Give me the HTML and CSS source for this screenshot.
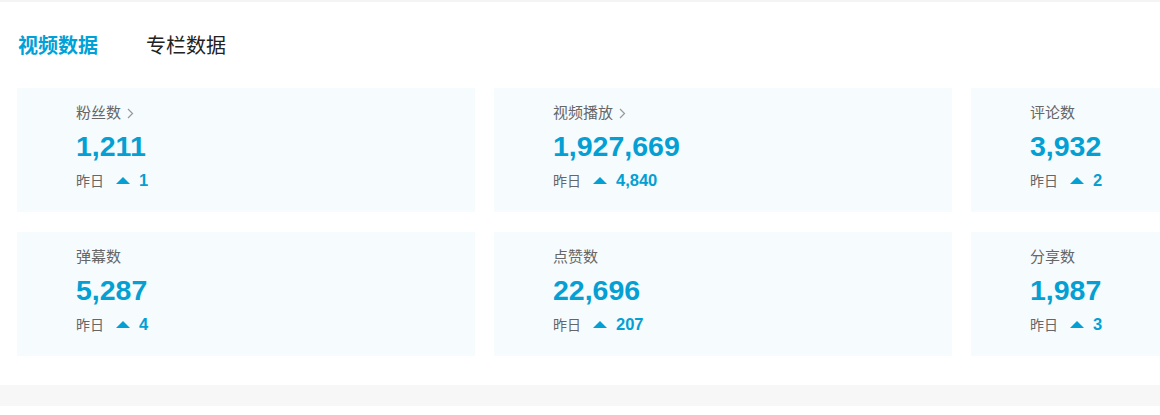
FILE: index.html
```html
<!DOCTYPE html>
<html lang="zh">
<head>
<meta charset="utf-8">
<link rel="stylesheet" href="styles.css">
</head>
<body>
<div class="topline"></div>
<div class="page">
  <div class="tabs">
    <span class="tab active">视频数据</span>
    <span class="tab">专栏数据</span>
  </div>
  <div class="grid">
    <div class="card">
      <div class="label">粉丝数<svg class="chev" width="7" height="11" viewBox="0 0 7 11"><path d="M1 1 L5.5 5.5 L1 10" fill="none" stroke="#999" stroke-width="1.2"/></svg></div>
      <div class="num">1,211</div>
      <div class="yest"><span>昨日</span><i class="tri"></i><b>1</b></div>
    </div>
    <div class="card">
      <div class="label">视频播放<svg class="chev" width="7" height="11" viewBox="0 0 7 11"><path d="M1 1 L5.5 5.5 L1 10" fill="none" stroke="#999" stroke-width="1.2"/></svg></div>
      <div class="num">1,927,669</div>
      <div class="yest"><span>昨日</span><i class="tri"></i><b>4,840</b></div>
    </div>
    <div class="card">
      <div class="label">评论数</div>
      <div class="num">3,932</div>
      <div class="yest"><span>昨日</span><i class="tri"></i><b>2</b></div>
    </div>
    <div class="card">
      <div class="label">弹幕数</div>
      <div class="num">5,287</div>
      <div class="yest"><span>昨日</span><i class="tri"></i><b>4</b></div>
    </div>
    <div class="card">
      <div class="label">点赞数</div>
      <div class="num">22,696</div>
      <div class="yest"><span>昨日</span><i class="tri"></i><b>207</b></div>
    </div>
    <div class="card">
      <div class="label">分享数</div>
      <div class="num">1,987</div>
      <div class="yest"><span>昨日</span><i class="tri"></i><b>3</b></div>
    </div>
  </div>
</div>
<div class="band"></div>
</body>
</html>
```
FILE: styles.css
```css
html, body {
  margin: 0;
  padding: 0;
  background: #fff;
  overflow: hidden;
  font-family: "Liberation Sans", Arial, "Noto Sans CJK SC", sans-serif;
}
.topline {
  height: 2px;
  background: #f4f4f4;
}
.page {
  padding: 0 0 0 17px;
  overflow: hidden;
}
.tabs {
  display: flex;
  gap: 48px;
  padding: 32px 0 0 1px;
  height: 54px;
  box-sizing: border-box;
}
.tab {
  font-size: 20px;
  line-height: 24px;
  color: #222;
}
.tab.active {
  color: #00a1d6;
  font-weight: bold;
}
.grid {
  display: grid;
  grid-template-columns: 458px 458px 458px;
  grid-auto-rows: 124px;
  column-gap: 19px;
  row-gap: 20px;
  margin-top: 32px;
  width: 1400px;
}
.card {
  background: #f6fbfe;
  padding: 15px 0 0 59px;
  box-sizing: border-box;
}
.label {
  font-size: 15px;
  line-height: 20px;
  color: #666;
  display: flex;
  align-items: center;
}
.chev {
  margin-left: 6px;
}
.num {
  margin-top: 6px;
  font-size: 28.5px;
  line-height: 34px;
  font-weight: bold;
  color: #049fd3;
}
.yest {
  margin-top: 7px;
  display: flex;
  align-items: center;
  height: 20px;
  font-size: 14px;
  color: #666;
}
.tri {
  width: 0;
  height: 0;
  border-left: 7px solid transparent;
  border-right: 7px solid transparent;
  border-bottom: 7px solid #049fd3;
  margin: 0 9px 0 12px;
}
.yest b {
  font-size: 16.5px;
  color: #049fd3;
}
.band {
  margin-top: 29px;
  height: 21px;
  background: #f7f7f7;
}
```
